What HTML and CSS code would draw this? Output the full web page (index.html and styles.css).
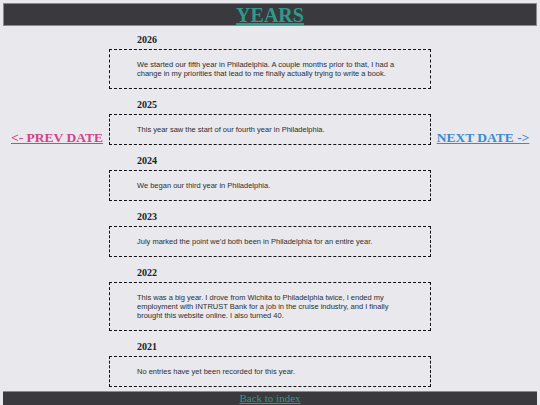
FILE: index.html
```html
<!DOCTYPE html>
<html lang="en">
<head>
    <meta charset="UTF-8">
    <meta name="viewport" content="width=device-width, initial-scale=1.0">
    <title>Years</title>
    <link rel="stylesheet" href="styles.css">
</head>
<body>
    <div class="topbar">
        <h1 class="title"><a href="#">YEARS</a></h1>
    </div>

    <div class="page">
        <div class="side">
            <a href="#" class="prev">&lt;- PREV DATE</a>
        </div>

        <div class="years">
            <div class="entry">
                <h3>2026</h3>
                <div class="box">
                    <p>We started our fifth year in Philadelphia. A couple months prior to that, I had a change in my priorities that lead to me finally actually trying to write a book.</p>
                </div>
            </div>
            <div class="entry">
                <h3>2025</h3>
                <div class="box">
                    <p>This year saw the start of our fourth year in Philadelphia.</p>
                </div>
            </div>
            <div class="entry">
                <h3>2024</h3>
                <div class="box">
                    <p>We began our third year in Philadelphia.</p>
                </div>
            </div>
            <div class="entry">
                <h3>2023</h3>
                <div class="box">
                    <p>July marked the point we'd both been in Philadelphia for an entire year.</p>
                </div>
            </div>
            <div class="entry">
                <h3>2022</h3>
                <div class="box">
                    <p>This was a big year. I drove from Wichita to Philadelphia twice, I ended my employment with INTRUST Bank for a job in the cruise industry, and I finally brought this website online. I also turned 40.</p>
                </div>
            </div>
            <div class="entry">
                <h3>2021</h3>
                <div class="box">
                    <p>No entries have yet been recorded for this year.</p>
                </div>
            </div>
        </div>

        <div class="side">
            <a href="#" class="next">NEXT DATE -&gt;</a>
        </div>
    </div>

    <div class="footer">
        <a href="#">Back to index</a>
    </div>
</body>
</html>
```

FILE: styles.css
```css
body {
    margin: 0;
    background: #e9e8ed;
    font-family: "Liberation Serif", "Times New Roman", serif;
}
.topbar {
    margin: 3px 3px 0;
    background: #3a393e;
    border: 1px solid #8b8a90;
    text-align: center;
    height: 21px;
}
.title {
    margin: 0;
    font-size: 20px;
    line-height: 22px;
}
.title a {
    color: #2f9a8b;
}
.page {
    display: grid;
    grid-template-columns: 1fr 322px 1fr;
    padding: 0 5px;
}
.side {
    display: flex;
    justify-content: center;
    padding-top: 104px;
}
.side a {
    font-size: 13.5px;
    font-weight: bold;
    height: 16px;
}
.prev {
    color: #d4428b;
}
.next {
    color: #3b8ad2;
}
.years {
    padding-bottom: 30px;
}
.entry h3 {
    margin: 10px 0 3px 28px;
    font-size: 10px;
    line-height: 12px;
    color: #222;
}
.entry:first-child h3 {
    margin-top: 8px;
}
.box {
    border: 1.5px dashed #111;
    padding: 10px 20px 10px 27px;
}
.box p {
    margin: 0;
    font-family: "Liberation Sans", Arial, sans-serif;
    font-size: 7.5px;
    line-height: 9px;
    color: #2e2e2e;
}
.footer {
    position: fixed;
    left: 3px;
    right: 3px;
    bottom: 0;
    height: 13px;
    background: #3a393e;
    border-top: 1px solid #8b8a90;
    text-align: center;
    font-size: 11px;
    line-height: 13px;
}
.footer a {
    color: #2f9a8b;
}
```
